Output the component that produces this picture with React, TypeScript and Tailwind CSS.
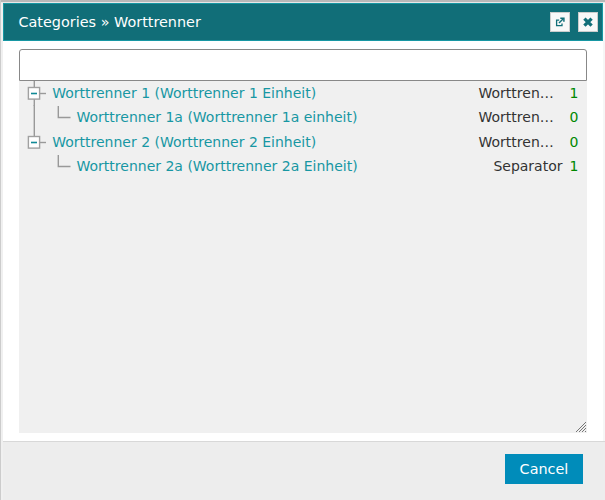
import React from "react";

type Entry = { label: string; unit: string; count: number; child: boolean };

const entries: Entry[] = [
  { label: "Worttrenner 1 (Worttrenner 1 Einheit)", unit: "Worttren…", count: 1, child: false },
  { label: "Worttrenner 1a (Worttrenner 1a einheit)", unit: "Worttren…", count: 0, child: true },
  { label: "Worttrenner 2 (Worttrenner 2 Einheit)", unit: "Worttren…", count: 0, child: false },
  { label: "Worttrenner 2a (Worttrenner 2a Einheit)", unit: "Separator", count: 1, child: true },
];

function OpenIcon() {
  return (
    <svg width="10" height="10" viewBox="0 0 10 10" fill="none" stroke="#116e78" strokeWidth="1.3">
      <path d="M4.2 3.2H1.6V8.6H7V6.4" />
      <path d="M4 6L8 2" strokeWidth="1.5" />
      <path d="M5.3 1.3H8.9V4.8" strokeWidth="1.5" />
    </svg>
  );
}

function CloseIcon() {
  return (
    <svg width="10" height="10" viewBox="0 0 10 10" stroke="#116e78" strokeWidth="3.3">
      <path d="M1.4 1.6L8.6 8.6M8.6 1.6L1.4 8.6" />
    </svg>
  );
}

function HeaderButton({ label, children }: { label: string; children: React.ReactNode }) {
  return (
    <button aria-label={label} className="flex h-5 w-5 items-center justify-center border border-[#ccc] bg-[#f8f8f8]">
      {children}
    </button>
  );
}

function Branch({ child, first }: { child: boolean; first: boolean }) {
  return (
    <svg
      className={`shrink-0 ${child ? "w-[53.5px]" : "w-[29.2px]"}`}
      height="25"
      fill="none"
      stroke="#999"
      strokeWidth="1.4"
    >
      {child ? (
        <>
          {first && <path d="M11.3 0V25" />}
          <path d="M35.3 1V12.5H47.5" />
        </>
      ) : (
        <>
          <path d={first ? "M11.3 0V25" : "M11.3 0V8"} />
          <path d="M17 12.5H23" />
          <rect x="5.4" y="6.5" width="11.2" height="11.6" fill="#fff" stroke="#a0a0a0" />
          <path d="M8 12.5H14" stroke="#118a96" strokeWidth="1.6" />
        </>
      )}
    </svg>
  );
}

export default function App() {
  return (
    <div className="flex h-[500px] w-[605px] flex-col overflow-hidden border-l border-[#ccc] bg-[#f6f6f6] font-['DejaVu_Sans',sans-serif] text-[14px]">
      <div className="h-[3px] shrink-0 border-b border-[#e8e8e8] bg-[#b8b8b8]" />
      <div className="flex grow flex-col border-l-2 border-[#f0f0f0]">
        <header className="flex h-[38px] w-[600px] shrink-0 items-center border border-[#1797a3] bg-[#116e78] pr-1 pl-[14.5px]">
          <h1 className="grow pt-0.5 text-[14.4px] text-white">Categories » Worttrenner</h1>
          <div className="flex gap-2">
            <HeaderButton label="Open"><OpenIcon /></HeaderButton>
            <HeaderButton label="Close"><CloseIcon /></HeaderButton>
          </div>
        </header>
        <main className="h-[400px] w-[600px] shrink-0 bg-white px-4 pt-2">
          <input className="block h-8 w-[568px] rounded-t-[3px] border border-[#888] bg-white px-2 outline-none" />
          <div className="relative h-[352px] w-[568px] bg-[#f0f0f0]">
            {entries.map((e, i) => (
              <div key={i} className={`flex items-start pl-1 leading-[25px] ${i === 1 ? "h-[25px]" : "h-6"}`}>
                <Branch child={e.child} first={i < 2} />
                <span className="grow whitespace-nowrap text-[#1797a3]">{e.label}</span>
                <span className={`w-[84px] whitespace-nowrap text-[#333] ${e.unit === "Separator" ? "text-right" : "text-left"}`}>
                  {e.unit}
                </span>
                <span className="w-[24.5px] pr-[8.5px] text-right text-[#008800]">{e.count}</span>
              </div>
            ))}
            <svg className="absolute right-0 bottom-0" width="12" height="12" stroke="#777" strokeWidth="1">
              <path d="M1 11L11 1M4 11L11 4M7 11L11 7M10 11L11 10" />
            </svg>
          </div>
        </main>
        <footer className="flex grow items-start justify-end border-t border-[#d8d8d8] bg-[#ededed] pt-3 pr-[22px]">
          <button className="h-[30px] w-[78px] bg-[#008cba] pt-0.5 text-[14.4px] text-white">Cancel</button>
        </footer>
      </div>
    </div>
  );
}
